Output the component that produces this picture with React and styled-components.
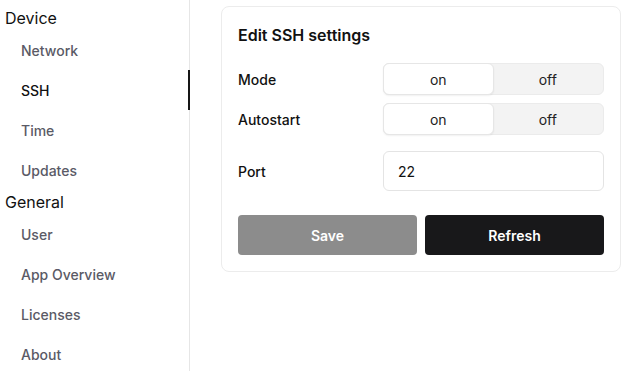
import React from "react";
import styled, { createGlobalStyle } from "styled-components";

const Global = createGlobalStyle`
  html, body { margin: 0; padding: 0; background: #fff; }
  body { font-family: Inter, "Noto Sans", sans-serif; color: #111; }
  * { box-sizing: border-box; }
`;

const Layout = styled.div`
  display: flex;
  height: 371px;
  width: 630px;
  overflow: hidden;
`;

const Sidebar = styled.nav`
  width: 190px;
  flex: none;
  border-right: 1px solid #e6e6e6;
  padding-top: 6px;
  display: flex;
  flex-direction: column;
`;

const GroupTitle = styled.div`
  flex: none;
  font-size: 16px;
  line-height: 24px;
  padding-left: 5px;
  color: #111;
`;

const NavItem = styled.div`
  flex: none;
  position: relative;
  height: 40px;
  display: flex;
  align-items: center;
  padding-left: 21px;
  font-size: 14px;
  font-weight: 500;
  color: ${(p) => (p.$active ? "#111" : "#5a5a66")};
  margin-right: -1px;
  ${(p) =>
    p.$active &&
    `&::after { content: ""; position: absolute; right: 0; top: 0; bottom: 0; width: 2px; background: #161616; }`}
`;

const Main = styled.main`
  flex: 1;
  padding: 6px 0 0 31px;
`;

const Card = styled.section`
  width: 400px;
  border: 1px solid #ececec;
  border-radius: 8px;
  padding: 16px;
  display: flex;
  flex-direction: column;
`;

const Title = styled.h2`
  margin: 0;
  font-size: 16px;
  line-height: 24px;
  font-weight: 600;
  color: #111;
`;

const Row = styled.div`
  display: grid;
  grid-template-columns: 145px 1fr;
  align-items: center;
  margin-top: ${(p) => p.$gap}px;
`;

const Label = styled.label`
  font-size: 14px;
  font-weight: 500;
  color: #111;
`;

const Toggle = styled.div`
  display: grid;
  grid-template-columns: 1fr 1fr;
  height: 32px;
  background: #f3f3f3;
  border: 1px solid #ebebeb;
  border-radius: 6px;
`;

const Segment = styled.div`
  display: flex;
  align-items: center;
  justify-content: center;
  font-size: 14px;
  color: #222;
  margin: -1px 0 -1px -1px;
  border-radius: 6px;
  ${(p) =>
    p.$selected &&
    `background: #fff; border: 1px solid #e6e6e6; box-shadow: 0 1px 2px rgba(0,0,0,0.06);`}
`;

const Input = styled.input`
  height: 40px;
  width: 100%;
  border: 1px solid #e4e4e4;
  border-radius: 6px;
  padding: 0 14px;
  font-family: inherit;
  font-size: 14px;
  color: #111;
  outline: none;
`;

const Buttons = styled.div`
  display: grid;
  grid-template-columns: 1fr 1fr;
  gap: 8px;
  margin-top: 24px;
`;

const Button = styled.button`
  height: 40px;
  border: none;
  border-radius: 4px;
  font-family: inherit;
  font-size: 14px;
  font-weight: 600;
  color: #fff;
  background: ${(p) => (p.$disabled ? "#8c8c8c" : "#18181a")};
`;

const Switch = ({ value }) => (
  <Toggle>
    <Segment $selected={value === "on"}>on</Segment>
    <Segment $selected={value === "off"}>off</Segment>
  </Toggle>
);

export default function App() {
  return (
    <>
      <Global />
      <Layout>
        <Sidebar>
          <GroupTitle>Device</GroupTitle>
          <NavItem>Network</NavItem>
          <NavItem $active>SSH</NavItem>
          <NavItem>Time</NavItem>
          <NavItem>Updates</NavItem>
          <GroupTitle>General</GroupTitle>
          <NavItem>User</NavItem>
          <NavItem>App Overview</NavItem>
          <NavItem>Licenses</NavItem>
          <NavItem>About</NavItem>
        </Sidebar>
        <Main>
          <Card>
            <Title>Edit SSH settings</Title>
            <Row $gap={16}>
              <Label>Mode</Label>
              <Switch value="on" />
            </Row>
            <Row $gap={8}>
              <Label>Autostart</Label>
              <Switch value="on" />
            </Row>
            <Row $gap={16}>
              <Label>Port</Label>
              <Input defaultValue="22" />
            </Row>
            <Buttons>
              <Button $disabled>Save</Button>
              <Button>Refresh</Button>
            </Buttons>
          </Card>
        </Main>
      </Layout>
    </>
  );
}
